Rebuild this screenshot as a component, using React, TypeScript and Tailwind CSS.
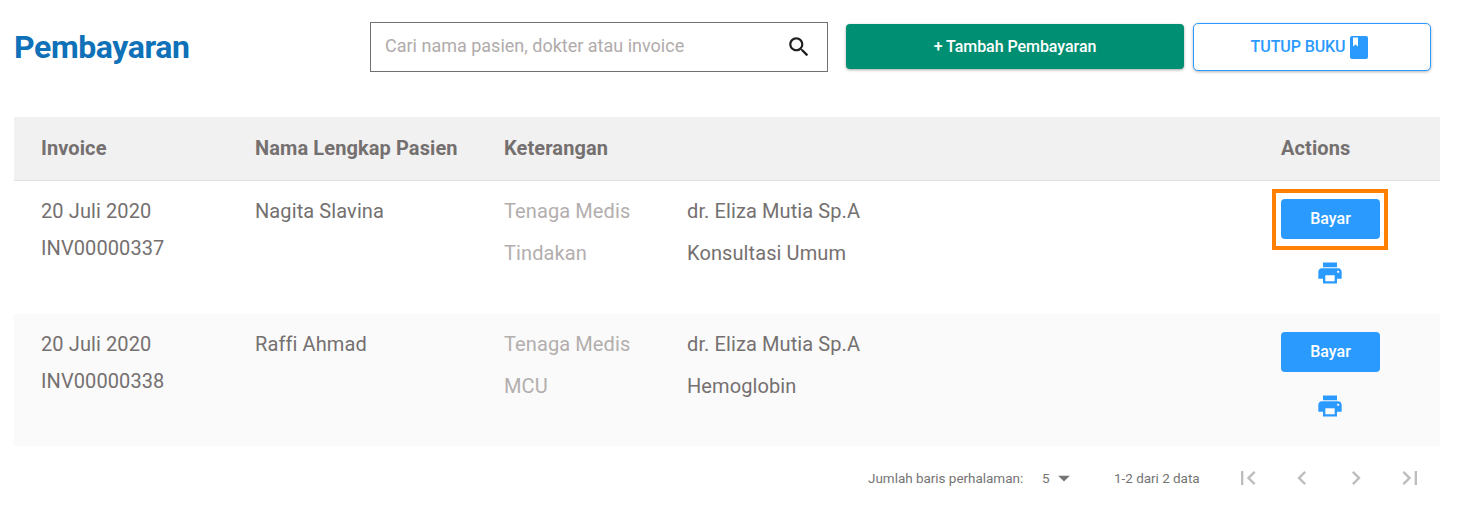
import React from "react";

const rows = [
  { date: "20 Juli 2020", invoice: "INV00000337", name: "Nagita Slavina", label: "Tindakan", value: "Konsultasi Umum", highlight: true, bg: "bg-white" },
  { date: "20 Juli 2020", invoice: "INV00000338", name: "Raffi Ahmad", label: "MCU", value: "Hemoglobin", highlight: false, bg: "bg-[#fafafa]" },
];

const PrintIcon = () => (
  <svg width="28" height="28" viewBox="0 0 24 24" fill="#2b9aff">
    <path d="M19 8H5c-1.66 0-3 1.34-3 3v6h4v4h12v-4h4v-6c0-1.66-1.34-3-3-3zm-3 11H8v-5h8v5zm3-7c-.55 0-1-.45-1-1s.45-1 1-1 1 .45 1 1-.45 1-1 1zm-1-9H6v4h12V3z" />
  </svg>
);

const NavIcon = ({ d }: { d: string }) => (
  <svg width="28" height="28" viewBox="0 0 24 24" fill="#bdbdbd">
    <path d={d} />
  </svg>
);

export default function App() {
  return (
    <div className="w-[1465px] h-[515px] bg-white overflow-hidden font-['Roboto',sans-serif]">
      {/* header */}
      <div className="flex items-start h-[117px] pl-[14px]">
        <h1 className="w-[356px] mt-[27px] text-[32px] leading-[40px] font-bold tracking-[-0.4px] text-[#0f71b8]">Pembayaran</h1>
        <div className="mt-[22px] w-[458px] h-[50px] border border-[#757070] flex items-center justify-between pl-[14px] pr-[15px]">
          <span className="text-[18px] leading-[24px] pb-[2px] text-[#b0abab]">Cari nama pasien, dokter atau invoice</span>
          <svg width="26" height="26" viewBox="0 0 24 24" fill="#1f1f1f">
            <path d="M15.5 14h-.79l-.28-.27C15.41 12.59 16 11.11 16 9.5 16 5.91 13.09 3 9.5 3S3 5.91 3 9.5 5.91 16 9.5 16c1.61 0 3.09-.59 4.23-1.57l.27.28v.79l5 4.99L20.49 19l-4.99-5zm-6 0C7.01 14 5 11.99 5 9.5S7.01 5 9.5 5 14 7.01 14 9.5 11.99 14 9.5 14z" />
          </svg>
        </div>
        <button className="mt-[24px] ml-[18px] w-[338px] h-[45px] rounded bg-[#008f72] text-white text-[16px] tracking-[-0.05px] font-medium shadow-[0_1px_3px_rgba(0,0,0,0.35)]">+ Tambah Pembayaran</button>
        <button className="mt-[23px] ml-[9px] w-[238px] h-[48px] pr-[5px] rounded-[5px] border border-[#2b9aff] bg-white text-[#2b9aff] text-[16px] tracking-[-0.1px] font-medium flex items-center justify-center gap-[5px] shadow-[0_1px_3px_rgba(0,0,0,0.3)]">
          TUTUP BUKU
          <svg width="18" height="23" viewBox="0 0 18 23" fill="#2b9aff">
            <path fillRule="evenodd" d="M2 0h14a2 2 0 0 1 2 2v19a2 2 0 0 1-2 2H2a2 2 0 0 1-2-2V2a2 2 0 0 1 2-2zm1 1.5v9l2.5-2 2.5 2v-9z" />
          </svg>
        </button>
      </div>

      {/* table */}
      <div className="ml-[14px] w-[1426px]">
        <div className="grid grid-cols-[241px_249px_183px_594px_159px] h-[64px] pb-[2px] items-center bg-[#f1f1f1] border-b border-[#e0e0e0] text-[20px] font-bold tracking-[0.1px] text-[#757070]">
          <div className="pl-[27px]">Invoice</div>
          <div>Nama Lengkap Pasien</div>
          <div>Keterangan</div>
          <div />
          <div>Actions</div>
        </div>
        {rows.map((row, i) => (
          <div key={row.invoice} className={`grid grid-cols-[241px_249px_183px_594px_159px] ${i === 0 ? "h-[133px]" : "h-[132px]"} text-[20px] tracking-[0.1px] text-[#757070] ${row.bg}`}>
            <div className="pl-[27px] pt-[17px] leading-[26px]">
              <div>{row.date}</div>
              <div className="mt-[11px]">{row.invoice}</div>
            </div>
            <div className="pt-[17px] leading-[26px]">{row.name}</div>
            <div className="pt-[17px] leading-[26px] text-[#b3aeae]">
              <div>Tenaga Medis</div>
              <div className="mt-[16px]">{row.label}</div>
            </div>
            <div className="pt-[17px] leading-[26px]">
              <div>dr. Eliza Mutia Sp.A</div>
              <div className="mt-[16px]">{row.value}</div>
            </div>
            <div className="pt-[18px]">
              <div className="relative w-[99px]">
                <button className="w-[99px] h-[40px] rounded bg-[#2b9aff] text-white text-[16px] tracking-normal font-medium block">Bayar</button>
                {row.highlight && <div className="absolute -left-[9px] -top-[10px] w-[116px] h-[61px] border-[4px] border-[#ff8000]" />}
              </div>
              <div className="w-[98px] flex justify-center mt-[20px]">
                <PrintIcon />
              </div>
            </div>
          </div>
        ))}
        {/* pagination */}
        <div className="flex items-center h-[64px] text-[13.5px] tracking-[-0.03px] text-[#757575]">
          <span className="ml-[854px] w-[174px]">Jumlah baris perhalaman:</span>
          <span className="w-[8px]">5</span>
          <svg width="28" height="28" viewBox="0 0 24 24" fill="#757575"><path d="M7 10l5 5 5-5z" /></svg>
          <span className="ml-[36px] w-[86px] whitespace-nowrap">1-2 dari 2 data</span>
          <div className="ml-[34px] flex gap-[26px]">
            <NavIcon d="M18.41 16.59L13.82 12l4.59-4.59L17 6l-6 6 6 6zM6 6h2v12H6z" />
            <NavIcon d="M15.41 7.41L14 6l-6 6 6 6 1.41-1.41L10.83 12z" />
            <NavIcon d="M10 6L8.59 7.41 13.17 12l-4.58 4.59L10 18l6-6z" />
            <NavIcon d="M5.59 7.41L10.18 12l-4.59 4.59L7 18l6-6-6-6zM16 6h2v12h-2z" />
          </div>
        </div>
      </div>
    </div>
  );
}
